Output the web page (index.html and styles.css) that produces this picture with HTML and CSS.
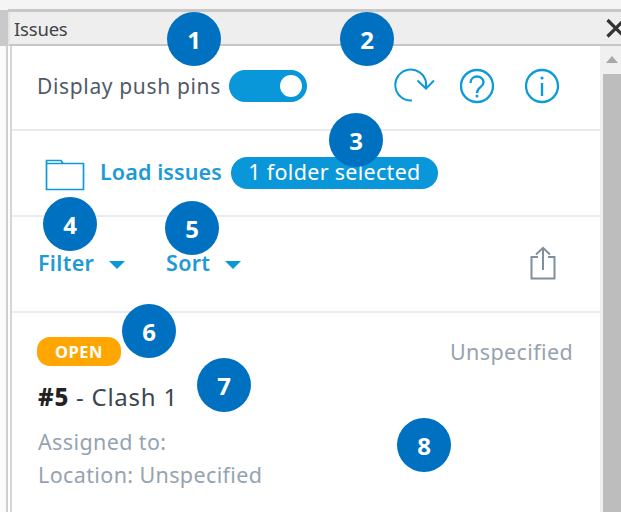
FILE: index.html
```html
<!DOCTYPE html>
<html lang="en">
<head>
<meta charset="utf-8">
<title>Issues</title>
<link rel="stylesheet" href="styles.css">
</head>
<body>
<div class="shot">
  <div class="gutter"><div class="gutter-top"></div></div>
  <div class="window">
    <header class="titlebar"><span class="title">Issues</span>
      <svg class="close" width="15" height="20" viewBox="0 0 15 20"><path d="M1.500 2L18 18.500M18 2L1.500 18.500" fill="none" stroke="#333" stroke-width="3.200"/></svg>
    </header>
    <div class="body">
      <main class="panel">
        <section class="row row-top">
          <span class="label">Display push pins</span>
          <span class="toggle"><span class="knob"></span></span>
          <span class="tools">
            <svg class="ic" width="44" height="36" viewBox="0 0 44 36"><path d="M19 32.500A15.500 15.500 0 1 1 33 14V20" fill="none" stroke="#0d9ad8" stroke-width="2"/><path d="M24.500 12.500L33 20.500L41 12.500" fill="none" stroke="#0d9ad8" stroke-width="2"/></svg>
            <svg class="ic" width="36" height="36" viewBox="0 0 36 36"><circle cx="17" cy="18" r="16" fill="none" stroke="#0d9ad8" stroke-width="2.300"/><path d="M10.500 15c0-4 3-6.500 6.500-6.500s6.500 2.500 6.500 6c0 5-6.500 4.500-6.500 10.500" fill="none" stroke="#0d9ad8" stroke-width="2.300"/><circle cx="17" cy="28" r="1.500" fill="#0d9ad8"/></svg>
            <svg class="ic" width="36" height="36" viewBox="0 0 36 36"><circle cx="18" cy="18" r="16" fill="none" stroke="#0d9ad8" stroke-width="2.300"/><path d="M18 15V28" stroke="#0d9ad8" stroke-width="2.400"/><circle cx="18" cy="10" r="1.600" fill="#0d9ad8"/></svg>
          </span>
        </section>
        <section class="row row-load">
          <svg class="folder" width="40" height="33" viewBox="0 0 40 33"><path d="M1.500 31.500V2.500H16l2 3H38.500V31.500ZM1.500 5.500H18" fill="none" stroke="#0d9ad8" stroke-width="1.700"/></svg>
          <span class="link">Load issues</span>
          <span class="pill">1 folder selected</span>
        </section>
        <section class="row row-filter">
          <span class="link menu menu-filter"><span class="menu-text">Filter</span><i class="caret"></i></span>
          <span class="link menu"><span class="menu-text">Sort</span><i class="caret"></i></span>
          <svg class="share" width="26" height="34" viewBox="0 0 26 34"><path d="M8 11H1.500V32.500H24.500V11H18" fill="none" stroke="#7f909d" stroke-width="2"/><path d="M13 24V2M6 8.500L13 1.800L20 8.500" fill="none" stroke="#7f909d" stroke-width="2"/></svg>
        </section>
        <section class="issue">
          <div class="issue-head"><span class="status">OPEN</span><span class="muted">Unspecified</span></div>
          <div class="issue-title"><b>#5</b> - Clash 1</div>
          <div class="muted meta">Assigned to:</div>
          <div class="muted meta">Location: Unspecified</div>
        </section>
      </main>
      <aside class="scrollbar"><i class="up"></i><div class="thumb"></div></aside>
    </div>
  </div>
  <span class="num n1">1</span>
  <span class="num n2">2</span>
  <span class="num n3">3</span>
  <span class="num n4">4</span>
  <span class="num n5">5</span>
  <span class="num n6">6</span>
  <span class="num n7">7</span>
  <span class="num n8">8</span>
</div>
</body>
</html>
```
FILE: styles.css
```css
* { box-sizing: border-box; }
html, body { margin: 0; padding: 0; }
body { width: 621px; height: 512px; overflow: hidden; background: #f5f5f5; font-family: "Noto Sans", sans-serif; }
.shot { position: relative; width: 621px; height: 512px; padding-top: 9px; display: flex; overflow: hidden; }
.gutter { width: 8px; flex: none; margin-top: 1px; background: #fbfbfb; border-right: 2px solid #cfcfcf; }
.gutter-top { width: 8px; height: 36px; background: #c9c9c9; }
.window { flex: 1; min-width: 0; display: flex; flex-direction: column; border-top: 3px solid #c8c8c8; background: #eeeeee; }
.titlebar { height: 34px; flex: none; padding-left: 4px; display: flex; justify-content: space-between; align-items: center; background: #eeeeee; border-bottom: 2px solid #c6c6c6; border-left: 2px solid #e4e4e4; }
.title { font-size: 18.500px; color: #444; letter-spacing: -.2px; }
.close { display: block; flex: none; }
.body { flex: 1; min-height: 0; display: flex; background: #fff; padding-left: 2px; }
.panel { width: 590px; flex: none; background: #fff; border-left: 2px solid #d6d6d6; }
.row { display: flex; align-items: center; border-bottom: 2px solid #e8ecf0; }
.row-top { height: 85px; padding: 0 0 3px 25px; }
.label { font-size: 21px; color: #4f5a66; width: 183px; white-space: nowrap; letter-spacing: .65px; }
.toggle { width: 78px; height: 32px; margin-left: 9px; border-radius: 16px; background: #0a97d9; display: flex; align-items: center; justify-content: flex-end; padding-right: 5px; }
.knob { width: 22px; height: 22px; border-radius: 50%; background: #fff; }
.tools { margin-left: 86px; display: flex; align-items: center; }
.tools .ic { display: block; }
.tools .ic:nth-child(2) { margin-left: 23px; }
.tools .ic:nth-child(3) { margin-left: 28px; }
.row-load { height: 86px; padding: 0 0 0 33px; }
.folder { display: block; margin-top: 2px; }
.link { font-size: 21.500px; font-weight: 600; color: #1e9ad6; }
.row-load .link { margin-left: 15px; width: 122px; white-space: nowrap; padding-bottom: 4px; letter-spacing: .1px; }
.pill { margin-left: 9px; height: 32px; width: 207px; padding-bottom: 3px; border-radius: 16px; background: #0a97d9; color: #fff; font-size: 21.500px; letter-spacing: .3px; display: flex; align-items: center; justify-content: center; white-space: nowrap; }
.row-filter { height: 96px; padding: 0 44px 0 26px; }
.menu { display: flex; align-items: center; }
.menu-filter { width: 128px; }
.menu-text { padding-bottom: 4px; letter-spacing: .3px; }
.caret { width: 0; height: 0; margin-left: 15px; border-left: 8px solid transparent; border-right: 8px solid transparent; border-top: 8px solid #0a97d9; margin-top: 1px; }
.share { margin-left: auto; display: block; margin-top: -3px; }
.issue { padding: 22px 27px 0 26px; }
.issue-head { display: flex; justify-content: space-between; align-items: center; height: 32px; }
.status { width: 84px; height: 29px; margin-left: -1px; border-radius: 13px; background: #ffa600; color: #fff; font-size: 16.500px; font-weight: 700; letter-spacing: .5px; text-align: center; line-height: 29px; }
.muted { color: #95a3b0; font-size: 21.500px; letter-spacing: .38px; }
.issue-title { font-size: 24px; color: #3c4650; margin-top: 13px; line-height: 34px; letter-spacing: .75px; }
.issue-title b { color: #222; font-weight: 800; }
.meta { line-height: 33px; }
.issue-title + .meta { margin-top: 11px; }
.scrollbar { flex: 1; background: #f0f0f0; display: flex; flex-direction: column; align-items: center; min-width: 0; padding-left: 3px; }
.up { width: 0; height: 0; margin-top: 10px; border-left: 6px solid transparent; border-right: 6px solid transparent; border-bottom: 7px solid #a8a8a8; }
.thumb { flex: 1; width: 100%; margin-top: 11px; background: #bdbdbd; }
.num { position: absolute; width: 54px; height: 54px; border-radius: 50%; background: #0070c0; color: #fff; font-family: "Open Sans", sans-serif; font-size: 24px; font-weight: 700; display: flex; align-items: center; justify-content: center; }
.n1 { left: 167px; top: 12px; }
.n2 { left: 340px; top: 12px; }
.n3 { left: 329px; top: 113px; }
.n4 { left: 43px; top: 197px; }
.n5 { left: 165px; top: 201px; }
.n6 { left: 122px; top: 304px; }
.n7 { left: 197px; top: 358px; }
.n8 { left: 397px; top: 418px; }
```
